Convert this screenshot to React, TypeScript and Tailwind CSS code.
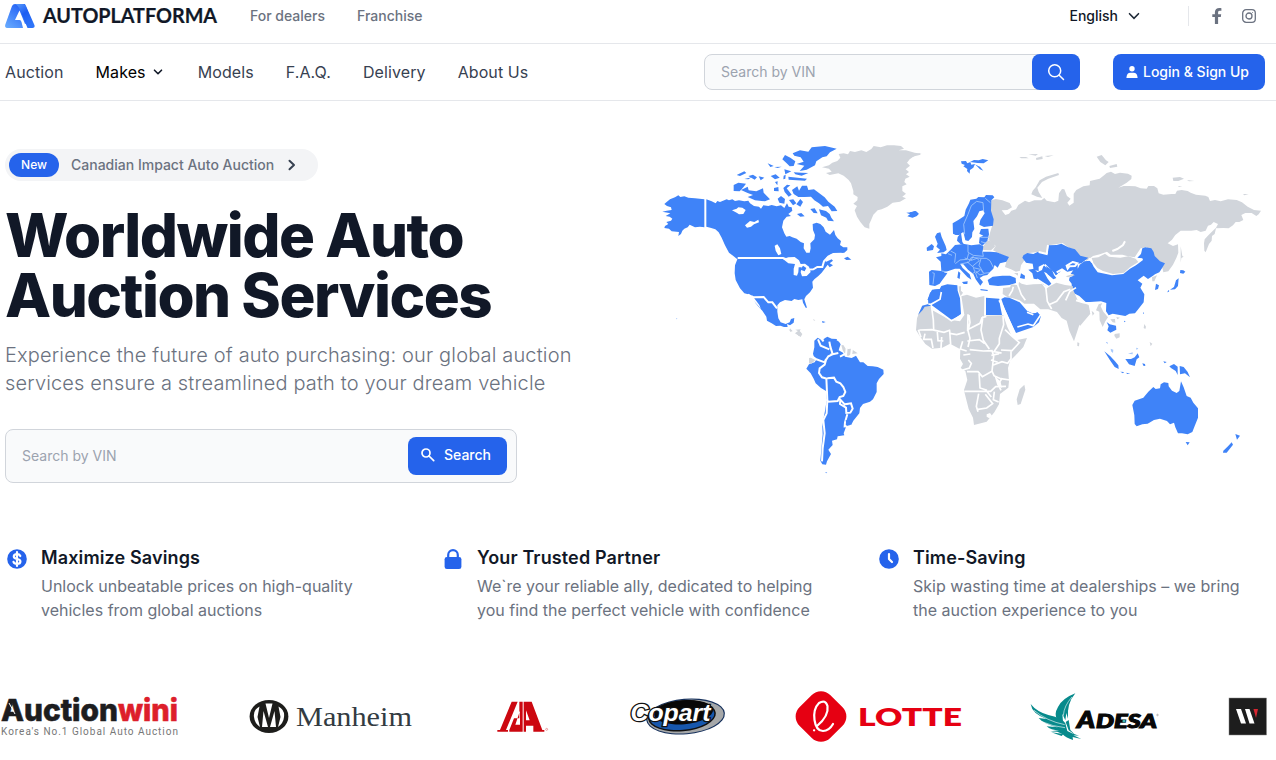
import type { ReactNode } from "react";

const BLUE = "#3f83f8";
const GRAY = "#d1d5db";

const navItems = ["Models", "F.A.Q.", "Delivery", "About Us"];

function BrandMark() {
  return (
    <svg width="30" height="24" viewBox="0 0 30 24" className="shrink-0">
      <defs>
        <linearGradient id="markLeft" x1="0" y1="1" x2="0.7" y2="0.2">
          <stop offset="0" stopColor="#6baeff" />
          <stop offset="1" stopColor="#2563f5" />
        </linearGradient>
        <linearGradient id="markRight" x1="0" y1="0" x2="0.6" y2="1">
          <stop offset="0" stopColor="#5b9dfc" />
          <stop offset="0.5" stopColor="#1d5df2" />
          <stop offset="1" stopColor="#2e74f8" />
        </linearGradient>
      </defs>
      <path d="M10 0H20L27 18L20 20L14.5 6.5L10 16H14.5Q16 16 16.5 18L18 24H3Q-1 24 .5 20L7 2Q8 0 10 0Z" fill="url(#markLeft)" />
      <path d="M10 0H18Q20 0 21 2L29.4 21Q30.4 24 27.5 24H22.5L15 6Q13 1 10 0Z" fill="url(#markRight)" />
    </svg>
  );
}

function WorldMap() {
  return (
    <svg width="612" height="340" viewBox="655 140 612 340" className="block">
      {/* North America */}
      <g transform="translate(655 140) scale(.33333)" fill={BLUE}>
        <path d="M22 215L35 212 50 210 48 202 36 198 28 192 34 187 45 178 60 172 70 166 76 171 88 169 100 173 120 175 148 178V262L135 260 120 262 112 258 104 254 98 262 88 266 82 272 78 282 70 288 72 276 50 274 42 266 28 264 30 258 40 252 34 246 48 242 52 236 44 230 32 228 46 220Z" />
        <path d="M154 178L170 184 182 190 187 183 195 186 215 178 222 181 232 178 240 183 252 181 268 184 280 182 285 190 297 198 312 200 318 206 325 196 340 198 350 195 365 199 378 196 388 204 396 190 401 200 410 202 412 212 400 222 408 228 395 230 385 242 381 262 388 280 394 290 404 288 412 292 425 296 437 306 447 310 446 325 454 338 464 338 467 325 466 310 478 298 480 285 474 270 473 252 485 248 496 252 506 262 512 275 525 284 537 270 541 285 548 295 558 303 555 315 565 322 577 322 577 330 568 338 553 340 530 342 515 352 512 366 530 358 534 362 524 370 534 376 524 382 518 374 508 388 500 398 490 408 478 418 472 425 474 443 465 457 453 468 448 478 456 503 452 503 444 488 442 478 430 480 418 477 410 483 390 480 375 487 367 496 367 515 370 535 377 547 392 552 404 547 408 537 418 534 416 548 405 556 396 552 398 561 387 561 376 557 363 558 350 550 336 542 334 530 322 512 312 502 302 490 294 475 285 464 268 460 255 445 242 420 239 400 240 376 247 358 235 348 222 338 210 316 200 293 191 277 181 268 166 263 154 260Z" />
        <path d="M292 466L300 478 313 495 318 508 307 494 290 476Z" fill="#fff" />
        <path d="M248 354H384L400 360 416 357M452 389L475 388 487 381 502 381 507 364 520 350 535 342 560 341M278 464L296 472 326 471 340 487 352 487 366 505" fill="none" stroke="#fff" strokeWidth="6" />
        <path d="M231 211L245 206 250 202 262 203 272 210 265 222 252 223 245 218ZM270 256L285 243 298 246 310 239 312 247 297 253 288 260 276 263ZM359 317L367 313 375 325 379 342 370 346 362 332ZM384 357L400 352 419 351 432 361 437 372 450 371 462 380 467 396 455 408 441 409 437 397 440 382 431 382 430 397 426 407 416 405 416 386 420 372 400 370Z" fill="#fff" />
        <path d="M436 389L444 377 454 384 449 394ZM567 355L578 350 589 359 574 360ZM236 135L250 128 273 131 265 142 254 154 236 153ZM258 150L278 140 281 151 304 154 324 145 326 158 345 178 330 184 300 181 278 171 294 165 278 159ZM413 40L435 31 460 35 470 22 510 18 545 26 525 37 515 49 502 52 484 64 480 76 455 89 434 93 448 77 425 72 446 65 437 52 418 47ZM382 58L390 45 406 53 421 64 416 78 404 79 395 70ZM411 150L427 139 432 152 441 137 456 137 460 150 477 148 493 160 509 172 520 185 539 200 547 213 530 214 519 198 504 200 492 190 478 181 468 170 448 171 430 171 416 162ZM385 144L396 134 406 136 395 145 410 164 401 170 389 156ZM357 144L370 141 371 154 357 153ZM368 176L378 168 390 177 388 191 373 188ZM424 193L436 177 444 186 436 200ZM466 207L479 205 488 220 476 219ZM492 208L513 213 524 222 529 233 537 244 519 242 514 233 498 226ZM388 88L409 94 391 103ZM400 110L456 116 450 122 401 119ZM416 97L440 98 460 99 440 107 421 103ZM347 108L362 103 374 113 360 118ZM280 108L294 104 306 112 299 119ZM245 105L268 94 274 99 255 108ZM338 70L356 78 346 81ZM311 109L328 113 317 121ZM426 222L439 219 449 229 436 230ZM386 107L392 104 391 116 385 118ZM402 180L415 178 424 190 414 196ZM358 81L380 80 368 84ZM268 117L290 112 280 118ZM360 126L368 124 367 136Z" />
        <path d="M501 543L512 546 503 549ZM506 597L517 590 530 596 546 597 545 600H506ZM64 535L67 536 65 538Z" />
        <path d="M401 568L412 572 407 576ZM421 569L437 568 433 575ZM427 581L438 576 438 588 431 588ZM474 537L481 541 477 542Z" fill={GRAY} />
      </g>

      {/* Greenland, Iceland and South America */}
      <g transform="translate(790 140) scale(.33333)" fill={BLUE}>
        <path fill={GRAY} d="M96 82L117 76 127 68 142 63 151 53 146 42 161 40 174 43 180 33 195 36 214 31 229 36 244 27 251 18 272 22 291 16 312 16 333 18 342 26 326 31 348 31 374 38 395 41 377 45 359 58 351 68 360 77 347 88 357 96 348 103 359 110 346 116 343 126 350 133 337 139 337 153 348 161 337 170 348 175 330 185 308 188 292 200 275 208 263 211 250 224 245 236 238 252 238 266 224 262 211 246 201 230 194 211 201 198 190 191 202 181 203 171 190 163 190 153 183 130 176 120 161 107 145 100 119 105 108 99 125 95 117 86Z" />
        <path d="M349 218L365 217 374 213 386 220 381 228 367 233 352 229 360 223Z" />
        <path d="M73 602L83 593 91 598 99 607 107 593 118 600 139 600 147 605 152 613 148 624 146 631 159 638 165 650 185 654 198 647 210 667 220 667 233 678 248 679 263 681 280 689 281 702 267 717 260 730 260 756 249 778 240 785 219 792 210 804 208 820 190 842 182 858 169 857 165 869 161 880 163 886 143 889 141 898 126 902 128 915 115 929 123 942 111 964 108 974 97 973 91 962 94 930 96 905 98 883 97 860 101 833 106 808 110 780 108 753 93 744 77 730 71 716 62 700 49 686 57 673 74 667 80 657 71 648 69 641 73 622Z" />
        <path fill={GRAY} d="M57 655L66 650 76 660 63 672 57 670ZM154 616L160 615 166 625 175 627 183 626 192 632 203 640 186 642 174 648 165 642 158 631ZM0 565L8 574 0 574ZM15 580L27 571 37 582 32 591Z" />
        <path d="M118 605L121 620 128 643 115 649 108 660 104 674 89 685 87 699 96 712 111 716M112 715L132 713 139 725 151 730 160 741 166 756 160 768 149 771 143 783 115 785 109 778M109 714L112 780 110 820 100 840 104 880 98 924 96 964M151 779L164 793 183 790 188 806 181 818 169 819 168 803 150 792ZM172 823L165 847 164 859 183 857M84 598L92 617 118 628M59 648L77 657 104 667 108 657M145 639L121 644M167 641L150 650M170 623L168 646M186 625L183 648" fill="none" stroke="#fff" strokeWidth="6" />
        <path d="M167 840L179 843 181 855 170 858ZM106 996L112 998 108 1000Z" />
      </g>

      {/* Northern and central Eurasia */}
      <g transform="translate(910 140) scale(.33333)" fill={GRAY}>
        <path d="M244 181L257 177 277 181 299 189 306 202 292 210 275 211 286 225 297 221 304 212 318 208 325 195 345 182 357 187 373 181 394 181 403 174 410 182 434 187 445 182 447 160 456 147 463 148 471 168 482 176 472 188 478 197 491 188 491 161 499 150 520 139 539 136 540 123 569 116 584 104 590 99 603 95 615 102 630 98 654 101 665 107 664 117 650 128 625 143 641 138 657 138 676 139 692 145 710 146 715 138 732 138 742 145 746 160 760 164 785 162 796 162 801 152 815 150 833 153 842 158 858 164 886 167 895 171 900 183 915 180 932 184 954 178 980 180 996 187 1013 200 1032 210 1053 212 1046 223 1039 228 1025 219 1006 219 994 225 1000 240 988 246 977 246 969 256 956 265 940 264 918 265 914 282 906 288 905 302 897 312 887 337 883 332 882 310 884 298 895 286 908 273 918 263 924 252 911 246 903 254 894 257 887 272 872 276 860 270 844 272 812 272 796 285 786 299 773 310 789 318 804 313 805 338 799 354 789 374 775 394 760 397 755 375 736 361 718 335 710 322 692 325 674 352 654 349 637 344 602 344 591 335 570 343 549 348 530 362 510 352 490 327 478 324 458 309 437 313 414 316 413 340 377 337 358 339 339 347 346 357 333 376 330 392 318 395 303 388 285 381 292 353 275 344 249 331 257 318 235 299 240 278 246 259 248 235 241 214Z" />
        <path d="M368 152L377 142 389 121 408 110 445 99 447 105 415 116 396 126 382 143 386 156 397 174 381 170 364 163ZM560 50L575 45 588 61 596 66 586 76 571 66ZM598 78L620 72 622 80 600 84ZM788 113L810 111 822 116 805 123 790 123ZM831 120L853 123 837 124ZM804 138L817 139 807 141ZM999 162L1016 162 1003 166ZM328 51L348 51 356 55 334 55ZM355 43L384 42 377 47ZM378 54L397 49 398 57 379 60ZM404 48L431 46 414 51ZM812 319L817 348 821 350 814 354 812 368ZM0 53L7 45 29 40 32 44 16 48ZM726 412L741 406 733 424 727 424Z" />
        <path d="M607 333L622 327 639 315 645 304" fill="none" stroke="#fff" strokeWidth="6" />
        <path d="M217 323L232 301 251 306 255 320 243 331 220 330Z" />
        <path d="M545 354L565 352 585 341 597 350 631 353 655 349 677 356 685 366 660 382 642 398 609 402 579 393 562 384 550 369Z" />

        <g fill={BLUE}>
          <path d="M340 346L352 339 370 342 383 336 413 342 415 316 440 315 454 311 475 322 495 328 511 347 535 353 515 369 503 372 503 388 470 396 455 387 450 396 439 405 426 405 411 390 402 372 386 380 386 393 371 390 368 371 348 368 337 353Z" />
          <path d="M355 389L372 386 382 397 396 390 400 379 406 374 421 390 434 400 438 414 431 415 408 398 402 396 412 415 424 431 413 440 398 432 382 418 371 416 367 400Z" />
          <path d="M490 390L504 385 509 374 523 364 542 362 551 380 563 397 606 406 640 402 660 386 678 376 699 360 697 355 682 353 693 342 697 325 706 322 724 325 731 336 734 348 750 364 765 370 755 386 748 397 735 403 729 407 714 417 701 407 683 421 697 431 691 443 703 463 701 487 687 505 675 520 658 521 646 528 608 521 596 526 588 514 589 489 573 484 528 487 508 468 486 457 485 431 477 421 480 405Z" />
          <path d="M153 64L168 63 172 70 181 66 184 74 195 72 190 83 180 90 179 101 171 93 172 87 160 79 165 75 155 71ZM180 66L192 60 206 61 218 57 235 61 221 70 203 69ZM195 73L206 79 210 80 220 92 210 88Z" />
          <path d="M129 281L128 250 146 239 163 228 167 209 177 190 181 179 199 176 205 171 223 172 228 165 248 166 253 172 244 181 243 212 251 238 249 257 222 261 208 254 211 240 224 220 220 211 208 214 201 229 190 243 193 267 187 277 186 291 175 303 166 301 160 276 146 285 137 285ZM143 291L153 278 157 306 164 316 152 313 141 302ZM213 267L235 266 237 283 232 302 217 317 207 309 209 292 220 287 208 281Z" />
          <path d="M81 280L91 277 95 291 107 318 110 330 101 337 81 339 90 329 79 320 83 311 75 290ZM50 323L65 312 72 319 69 330 51 333ZM125 326L135 315 163 312 184 316 209 313 220 319 218 335 241 335 260 337 283 346 297 351 289 365 270 370 263 383 254 375 250 386 239 397 232 405 220 407 209 414 219 426 211 437 197 418 190 402 174 389 160 373 151 372 158 384 179 403 184 419 172 411 149 386 135 386 115 393 101 397 112 400 97 420 89 431 75 438 58 435 57 395 65 390 94 393 92 365 78 352 94 348 94 340 108 343Z" />
          <path d="M233 420L248 410 277 407 300 407 317 414 318 429 298 435 264 438 238 435ZM145 394L151 399 149 417 142 413ZM156 426L173 424 172 432 161 432ZM211 447L234 450 232 453 212 451ZM333 400L345 407 344 417 330 414ZM811 390L820 391 826 395 820 401 810 399ZM806 415L804 438 795 448 780 449 792 441 798 421ZM738 431L747 436 744 447 735 450ZM774 452L778 455 772 457ZM759 460L763 461ZM66 449L90 447 88 461 69 478 52 480 61 460Z" />
          <path d="M0 217L18 213 26 223 10 232 0 230Z" />
        </g>
        <path d="M164 283L161 253 174 223 184 197 200 184 219 188 221 214M226 175L241 188M122 333L137 341 134 368M174 315L174 337 190 346 220 349 217 332M136 371L150 360 171 358 176 340M151 372L176 367 184 352 213 355 229 355 240 362 250 382M164 354L184 361 201 355 208 362 187 379 171 365M187 379L194 384 211 388 221 400 238 398M213 356L207 376 220 398M67 398L73 400 69 433M95 393L112 396M190 382L195 397 188 400M210 391L197 399 202 414M183 361L190 348M114 341L126 346M211 292L238 292M213 305L230 310M196 392L209 405 221 402" fill="none" stroke="#a4c9fb" strokeWidth="2.5" />
        <path d="M404 374L430 400 439 415M381 418L403 432 417 441M386 336L410 342 414 315M440 397L456 388 474 401M457 404L488 405 466 414 444 401M488 366L502 370 495 378 478 379 473 386 470 377ZM537 355L547 367" fill="none" stroke="#fff" strokeWidth="6" />
        <path fill={BLUE} d="M408 378L426 390 432 405 439 414 430 418 413 403Z" />
        <path d="M467 409L489 402 494 406 474 412ZM312 399L324 399 324 407Z" />
      </g>

      {/* Africa, Middle East and South Asia */}
      <g transform="translate(910 270) scale(.33333)" fill={GRAY}>
        <path d="M36 107L68 103 66 120 119 149 150 154 163 135 154 79 171 74 198 83 223 78 222 137 280 136 292 171 305 198 318 211 351 204 340 231 315 258 300 272 294 294 297 334 295 353 270 372 267 403 253 427 230 455 192 465 189 443 176 417 164 370 162 360 172 330 166 303 152 294 159 282 150 266 151 238 120 221 97 233 66 236 46 222 29 198 18 180 21 145Z" />
        <path d="M329 358L343 344 346 359 332 402 323 405 320 388ZM502 217L508 219 507 229 502 228ZM146 49L153 49 153 62 159 68 152 78 147 64Z" />
        <path d="M279 54L300 52 304 43 325 46 327 36 335 41 350 45 370 43 396 42 407 57 422 47 439 38 465 45 488 48 490 61 504 93 536 105 540 125 535 136 525 142 507 168 492 214 478 182 470 152 455 144 441 126 415 118 391 118 372 101 343 101 329 91 309 85 293 82 278 72Z" />
        <g fill={BLUE}>
          <path d="M24 135L37 107 55 102 54 87 60 68 71 59 89 57 94 48 112 43 142 46 143 62 150 85 153 132 123 153 63 107 44 110 38 120Z" />
          <path d="M228 83L268 86 270 104 276 135H228ZM274 87L284 82 298 83 329 97 351 122 367 130 377 129 382 126 393 138 387 157 370 171 318 189 309 170 284 117Z" />
        </g>
        <path d="M55 102L63 103 90 88 94 66M64 105L70 150 71 178M28 180L65 179 102 187 121 180M63 107L124 152 162 133M174 133L173 179 210 160 216 143 229 139M177 135L180 157 174 182 180 205 174 231M219 139L213 180 220 211 238 237M172 213L208 209 224 221M279 138L281 164 268 205 268 221 252 245 275 249M285 179L304 197 328 218 306 242 273 240M303 243V266L293 280 276 275 248 286M179 239L220 243 246 242 251 258 246 304 217 320 204 305 171 305M246 303L252 317 272 326 300 330M175 270L184 280 178 294 158 300M163 364L242 364 257 350 288 349M207 306L210 354 231 361M206 371L199 409 204 425M226 373L248 401 230 414 204 418M253 365L250 389 266 396M229 362L244 381M277 325L264 342 273 361M119 183L122 224M82 186L84 212 100 213M95 201L93 235M119 190L140 194 164 187M158 214L151 237 170 243M25 179L33 202M45 191L41 208 64 208 69 234M321 39L334 74 346 91M297 78L307 61 310 50M407 48L412 94 425 117M415 105L440 94 462 65 481 58M467 91L479 65 498 53M498 91L520 98 570 99M267 91L278 108 315 192M322 171L354 162 370 167 394 131M351 127L370 134M244 256L267 251M243 270L263 277M181 252L160 255" fill="none" stroke="#fff" strokeWidth="5" />
        <path fill="#fff" d="M230 433L240 429 246 437 238 445 230 440ZM253 316L272 336 276 354 261 343Z" />
      </g>

      {/* South-East Asia and Oceania */}
      <g transform="translate(1080 290) scale(.33333)" fill={BLUE}>
        <path d="M157 345L164 332 190 323 205 305 220 291 227 297 240 295 242 283 252 277 265 279 266 289 276 302 290 309 298 303 303 274 311 292 320 318 332 323 340 338 354 355 354 383 345 406 337 426 323 433 306 430 294 430 286 412 282 398 270 403 261 393 240 386 222 390 203 401 187 403 170 409 164 402 163 376ZM317 456L329 457 323 466ZM466 432L480 437 471 449ZM455 457L459 464 440 488 429 488 430 482 444 469ZM73 184L91 199 105 214 115 226 116 237 104 231 91 212ZM136 207L153 207 164 202 173 190 178 202 170 208 164 228 147 223ZM121 245L132 246 129 250ZM139 248L151 251 141 252ZM187 220L195 222 196 228 190 227ZM250 214L260 216 254 220ZM268 229L282 222 293 230 293 255 287 243 273 234ZM299 228L311 231 323 246 330 262 315 250 300 253ZM80 96L89 103 108 107 109 119 91 128 82 121 86 109ZM78 156L83 158 82 161Z" />
        <path fill="#a9cafa" d="M92 176L100 179 99 189 93 184ZM144 191L158 187 158 193ZM168 173L175 175 170 180Z" />
        <path fill={GRAY} d="M0 48L22 47 31 71 0 108ZM35 62L43 70 38 77ZM56 43L67 39 62 49 70 65 84 82 76 94 68 111 59 91 58 65 48 61ZM91 88L105 87 106 98 98 97ZM104 132L119 130 119 142 109 146 103 137ZM109 81L120 83 112 88ZM193 102L198 110 196 117 191 114ZM209 156L217 161 212 169Z" />
        <path d="M132 92L137 94 133 97ZM189 66L192 70 189 72ZM264 0L268 2 265 4Z" />
      </g>
    </svg>
  );
}

function Feature({ icon, title, children }: { icon: ReactNode; title: string; children: ReactNode }) {
  return (
    <div className="flex w-[436px] shrink-0">
      <div className="-mt-px mr-3 h-6 w-6 text-[#2563eb]">{icon}</div>
      <div>
        <h3 className="text-[18px] leading-5 font-semibold tracking-[0.13px] text-[#111827]">{title}</h3>
        <p className="mt-1.5 text-[16px] leading-6 whitespace-nowrap text-[#6b7280]">{children}</p>
      </div>
    </div>
  );
}

function Partners() {
  return (
    <svg width="1276" height="80" viewBox="0 680 1276 80" className="block">
      <text x="1" y="721" fontFamily="Inter" fontWeight="800" fontSize="30" textLength="117" lengthAdjust="spacingAndGlyphs" fill="#1d1d1f" stroke="#1d1d1f" strokeWidth=".6">Auction</text>
      <text x="118" y="721" fontFamily="Inter" fontWeight="800" fontSize="30" textLength="60" lengthAdjust="spacingAndGlyphs" fill="#dd1f2b" stroke="#dd1f2b" strokeWidth=".6">wini</text>
      <path d="M9 703L15 714" stroke="#fff" strokeWidth="1" />
      <text x="1" y="734.5" fontFamily="Roboto" fontSize="10" textLength="177" fill="#777">Korea's No.1 Global Auto Auction</text>

      <ellipse cx="269" cy="716.4" rx="19.4" ry="16.5" fill="#1d1d1b" />
      <path d="M259.5 706.5Q253 710 254 717Q254.500 723 260 727L257.500 717ZM278.500 706.500Q285 710 284 717Q283.500 723 278 727L280.500 717ZM265.500 703.500H272.500L269 718ZM263.500 711L268 727H262ZM274.500 711L276 727H270Z" fill="#fff" />
      <text x="296" y="726" fontFamily="Liberation Serif" fontSize="28" textLength="116" lengthAdjust="spacingAndGlyphs" fill="#333b42">Manheim</text>

      <g transform="translate(480 680) scale(.33333)" fill="#cc0710">
        <path d="M95 65H113L78 150H84V155H52V150H60Z" />
        <path fillRule="evenodd" d="M118 65H128V155H88V150L102 115H118ZM120 92L106 134H120Z" />
        <path fillRule="evenodd" d="M131 65H155L187 150H193V155H160V137H138V155H131ZM138 91V121H149Z" />
        <circle cx="200" cy="148" r="3" fill="none" stroke="#cc0710" />
      </g>

      <g transform="rotate(-5 686 716)">
        <ellipse cx="685.5" cy="716.5" rx="39.5" ry="17.8" fill="#15305c" />
        <ellipse cx="685.5" cy="716.5" rx="38.300" ry="16.700" fill="#a6a8a9" />
        <ellipse cx="682" cy="715.5" rx="34" ry="15.500" fill="#111" />
        <ellipse cx="682" cy="715.5" rx="32.500" ry="14" fill="#1757ad" />
        <ellipse cx="684" cy="712" rx="29.500" ry="12" fill="#080808" />
      </g>
      <text x="630.500" y="721" fontFamily="Liberation Sans" fontWeight="700" fontStyle="italic" fontSize="23" textLength="80" lengthAdjust="spacingAndGlyphs" fill="#fff" stroke="#111" strokeWidth="2.6" paintOrder="stroke">Copart</text>

      <rect x="799.25" y="694.75" width="43.5" height="43.5" rx="13" transform="rotate(45 821 716.5)" fill="#e60012" />
      <path d="M814 730.3H814.2M817 726Q829 716 827.500 706Q825.500 699 819 703Q813 709 814.500 720Q816 731 823 731Q829 731 833 724" fill="none" stroke="#fff" strokeWidth="2.2" strokeLinecap="round" />
      <text x="858" y="725.5" fontFamily="Lato" fontWeight="800" fontSize="25" textLength="104" lengthAdjust="spacingAndGlyphs" fill="#e60012">LOTTE</text>

      <g transform="translate(780 680) scale(.33333)" fill="#078a8c">
        <path d="M752 72Q770 95 805 105Q843 112 856 130L862 153L876 160L897 167L880 166L904 177L878 171L879 180Q858 174 848 163L832 155L811 154L838 151Q812 151 800 139L834 142Q790 132 776 114L800 117Q756 101 752 72Z" />
        <path d="M886 40Q847 55 834 81Q821 103 832 119L849 124L847 101L856 121L859 99L864 116Q860 70 886 40Z" />
        <path d="M762 91Q800 123 854 134M783 124Q820 140 855 143M876 51Q852 77 850 107" stroke="#fff" strokeWidth="1.8" fill="none" />
        <path d="M866 120L871 150L885 164L866 151L857 126Z" />
        <path d="M814 157L850 162L845 168Z" />
      </g>
      <g fontFamily="Lato" fontWeight="900" fontStyle="italic" fill="#080808" stroke="#080808" strokeWidth="1.1">
        <text x="1077" y="727.500" fontSize="22" textLength="18" lengthAdjust="spacingAndGlyphs">A</text>
        <text x="1096" y="727.500" fontSize="19" textLength="61" lengthAdjust="spacingAndGlyphs">DESA</text>
      </g>
      <circle cx="1124" cy="721" r="1.6" fill="#41b9b5" />
      <circle cx="1157.500" cy="715" r=".8" fill="none" stroke="#333" strokeWidth=".3" />

      <rect x="1229" y="698" width="37.5" height="37" fill="#1d1d1d" stroke="#888" strokeWidth=".5" />
      <path d="M1236 709H1241L1246 723.5H1241ZM1245 709H1249.500L1254.500 723.5H1249.500Z" fill="#fff" />
      <path d="M1253.500 709H1258L1256 718Z" fill="#d72631" />
    </svg>
  );
}

export default function App() {
  return (
    <div className="h-[760px] w-[1276px] overflow-hidden bg-white font-['Inter',sans-serif] text-[#111827]">
      <div className="flex h-11 items-start justify-between border-b border-[#e5e7eb] pl-[5px]">
        <div className="flex items-center pt-1">
          <BrandMark />
          <svg width="176" height="24" className="ml-[7px]">
            <text x="1" y="18.5" fontFamily="Lato" fontWeight="700" fontSize="20" textLength="174" lengthAdjust="spacingAndGlyphs" fill="#111827" stroke="#111827" strokeWidth=".2">AUTOPLATFORMA</text>
          </svg>
          <div className="ml-8 flex gap-8 text-[14px] leading-6 font-medium text-[#6b7280]">
            <a>For dealers</a>
            <a>Franchise</a>
          </div>
        </div>
        <div className="flex h-8 items-center pr-5">
          <span className="pb-px text-[14px] leading-5 font-medium">English</span>
          <svg width="12" height="12" viewBox="0 0 12 12" className="ml-2.5" fill="none" stroke="#1f2937" strokeWidth="1.6" strokeLinecap="round"><path d="M1.5 3.7L6 8.3L10.5 3.7" /></svg>
          <div className="ml-12 h-5 w-px bg-[#e5e7eb]" />
          <svg width="10" height="16" viewBox="0 0 10 16" className="ml-[23px]" fill="#6b7280"><path d="M2.9 16H6.1V9H8.8L9.2 6.2H6.1V4.5C6.1 3.5 6.5 2.8 7.8 2.8H9.4V.2C8.9.1 8.2 0 7.4 0C4.7 0 2.9 1.6 2.9 4.1V6.2H.3V9H2.9Z" /></svg>
          <svg width="14" height="14" viewBox="0 0 14 14" className="ml-5" fill="none" stroke="#6b7280" strokeWidth="1.3"><rect x=".7" y=".7" width="12.6" height="12.6" rx="3.4" /><circle cx="7" cy="7" r="3" /><circle cx="10.6" cy="3.4" r=".5" fill="#6b7280" stroke="none" /></svg>
        </div>
      </div>

      <nav className="flex h-[57px] items-center justify-between border-b border-[#e5e7eb] pr-[11px] pl-[5px]">
        <div className="flex gap-8 text-[16px] leading-6 tracking-[0.1px] text-[#374151]">
          <a>Auction</a>
          <a className="flex items-center text-black">Makes<svg width="10" height="10" viewBox="0 0 10 10" className="mr-[3px] ml-[7px]" fill="none" stroke="#111827" strokeWidth="1.6" strokeLinecap="round" strokeLinejoin="round"><path d="M1.5 3.2L5 6.7L8.5 3.2" /></svg></a>
          {navItems.map((item) => <a key={item}>{item}</a>)}
        </div>
        <div className="flex">
          <div className="flex h-9 w-[376px] items-center justify-between rounded-lg border border-[#d1d5db] bg-[#f9fafb] pl-4">
            <span className="pb-px text-[14px] leading-[19px] text-[#9ca3af]">Search by VIN</span>
            <button className="-mr-px flex h-9 w-12 items-center justify-center rounded-lg bg-[#2563eb]">
              <svg width="18" height="18" viewBox="0 0 18 18" fill="none" stroke="#fff" strokeWidth="1.5" strokeLinecap="round"><circle cx="7.7" cy="7.7" r="6" /><path d="M12.2 12.2L16.5 16.5" /></svg>
            </button>
          </div>
          <button className="ml-[33px] flex h-9 w-[152px] items-center rounded-lg bg-[#2563eb] pl-3 text-[14px] font-medium whitespace-nowrap text-white">
            <svg width="14" height="14" viewBox="0 0 14 14" className="mr-1" fill="#fff"><circle cx="7" cy="3.7" r="2.7" /><path d="M1.4 13Q1.6 7.8 5.5 7.8H8.5Q12.4 7.8 12.6 13Z" /></svg>
            <span className="leading-5">Login &amp; Sign Up</span>
          </button>
        </div>
      </nav>

      <main className="flex h-[447px]">
        <section className="w-[655px] pt-12 pl-[5px]">
          <div className="flex h-8 w-[313px] items-center rounded-full bg-[#f3f4f6] pl-1 text-[14px] font-medium text-[#6b7280]">
            <span className="mr-3 flex h-6 w-[50px] items-center justify-center rounded-full bg-[#2563eb] text-[12px] text-white">New</span>
            <span className="leading-5">Canadian Impact Auto Auction</span>
            <svg width="8" height="12" viewBox="0 0 8 12" className="ml-3.5" fill="none" stroke="#374151" strokeWidth="2" strokeLinecap="round" strokeLinejoin="round"><path d="M1.5 1.7L6 6L1.5 10.3" /></svg>
          </div>
          <h1 className="mt-6 text-[60px] leading-[60px] font-extrabold tracking-[-0.025em] whitespace-nowrap text-[#111827]">Worldwide Auto<br />Auction Services</h1>
          <p className="mt-4 text-[20px] leading-7 font-light tracking-[0.155px] whitespace-nowrap text-[#6b7280]">Experience the future of auto purchasing: our global auction<br />services ensure a streamlined path to your dream vehicle</p>
          <div className="mt-8 flex h-[54px] w-[512px] items-center justify-between rounded-lg border border-[#d1d5db] bg-[#f9fafb] pr-[9px] pl-4">
            <span className="text-[14px] leading-5 text-[#9ca3af]">Search by VIN</span>
            <button className="flex h-[38px] w-[99px] items-center rounded-lg bg-[#2563eb] pl-3 text-[14px] font-medium text-white">
              <svg width="16" height="16" viewBox="0 0 16 16" className="mr-2 mb-0.5" fill="none" stroke="#fff" strokeWidth="1.7" strokeLinecap="round"><circle cx="6" cy="6" r="4" /><path d="M9 9L13.7 13.7" /></svg>
              <span className="pb-[2px] leading-5">Search</span>
            </button>
          </div>
        </section>
        <div className="pt-[39px]"><WorldMap /></div>
      </main>

      <section className="flex h-[132px] pl-[5px]">
        <Feature title="Maximize Savings" icon={<svg viewBox="0 0 24 24"><circle cx="12" cy="12" r="9.8" fill="currentColor" /><path d="M12 5V19M15.3 9C14.8 7.8 13.5 7.2 12 7.2C10.3 7.2 8.8 8 8.8 9.6C8.8 13 15.4 11 15.4 14.4C15.4 16 13.9 16.8 12 16.8C10.2 16.8 8.9 16 8.5 14.8" fill="none" stroke="#fff" strokeWidth="2.2" strokeLinecap="round" /></svg>}>Unlock unbeatable prices on high-quality<br />vehicles from global auctions</Feature>
        <Feature title="Your Trusted Partner" icon={<svg viewBox="0 0 24 24"><path d="M7.2 11V8A4.8 4.8 0 0 1 16.8 8V11" fill="none" stroke="currentColor" strokeWidth="2.2" /><rect x="3.6" y="10" width="16.8" height="12" rx="2.3" fill="currentColor" /></svg>}>We`re your reliable ally, dedicated to helping<br />you find the perfect vehicle with confidence</Feature>
        <Feature title="Time-Saving" icon={<svg viewBox="0 0 24 24"><circle cx="12" cy="12" r="9.8" fill="currentColor" /><path d="M12 7V12L15 15" fill="none" stroke="#fff" strokeWidth="2.2" strokeLinecap="round" strokeLinejoin="round" /></svg>}>Skip wasting time at dealerships – we bring<br />the auction experience to you</Feature>
      </section>

      <Partners />
    </div>
  );
}
